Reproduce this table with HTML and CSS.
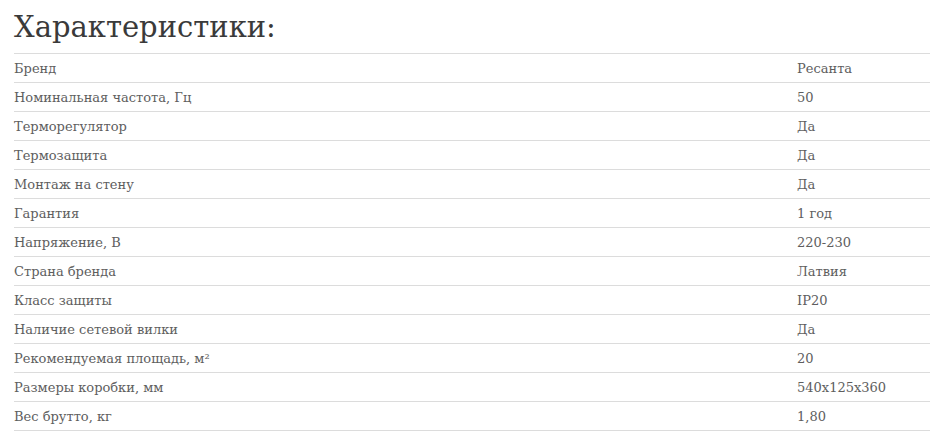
FILE: index.html
```html
<!DOCTYPE html>
<html lang="ru">
<head>
<meta charset="utf-8">
<link rel="stylesheet" href="styles.css">
</head>
<body>
<div class="specs">
  <h2 class="specs-title">Характеристики:</h2>
  <div class="specs-table">
    <div class="row"><span class="name">Бренд</span><span class="value">Ресанта</span></div>
    <div class="row"><span class="name">Номинальная частота, Гц</span><span class="value">50</span></div>
    <div class="row"><span class="name">Терморегулятор</span><span class="value">Да</span></div>
    <div class="row"><span class="name">Термозащита</span><span class="value">Да</span></div>
    <div class="row"><span class="name">Монтаж на стену</span><span class="value">Да</span></div>
    <div class="row"><span class="name">Гарантия</span><span class="value">1 год</span></div>
    <div class="row"><span class="name">Напряжение, В</span><span class="value">220-230</span></div>
    <div class="row"><span class="name">Страна бренда</span><span class="value">Латвия</span></div>
    <div class="row"><span class="name">Класс защиты</span><span class="value">IP20</span></div>
    <div class="row"><span class="name">Наличие сетевой вилки</span><span class="value">Да</span></div>
    <div class="row"><span class="name">Рекомендуемая площадь, м²</span><span class="value">20</span></div>
    <div class="row"><span class="name">Размеры коробки, мм</span><span class="value">540x125x360</span></div>
    <div class="row"><span class="name">Вес брутто, кг</span><span class="value">1,80</span></div>
  </div>
</div>
</body>
</html>
```

FILE: styles.css
```css
html, body {
  margin: 0;
  padding: 0;
  background: #ffffff;
}

.specs {
  padding-left: 14px;
  font-family: "DejaVu Serif", "Liberation Serif", serif;
}

.specs-title {
  margin: 0;
  height: 53px;
  box-sizing: border-box;
  padding-top: 9px;
  font-size: 29px;
  line-height: 36px;
  font-weight: normal;
  color: #3a3a3a;
}

.specs-table {
  border-top: 1px solid #dcdcdc;
}

.row {
  display: grid;
  grid-template-columns: 783px 1fr;
  height: 28px;
  box-sizing: border-box;
  padding-top: 1px;
  align-items: center;
  border-bottom: 1px solid #dcdcdc;
  font-size: 13px;
  color: #5e5e5e;
}

.row {
  height: 29px;
}
```
